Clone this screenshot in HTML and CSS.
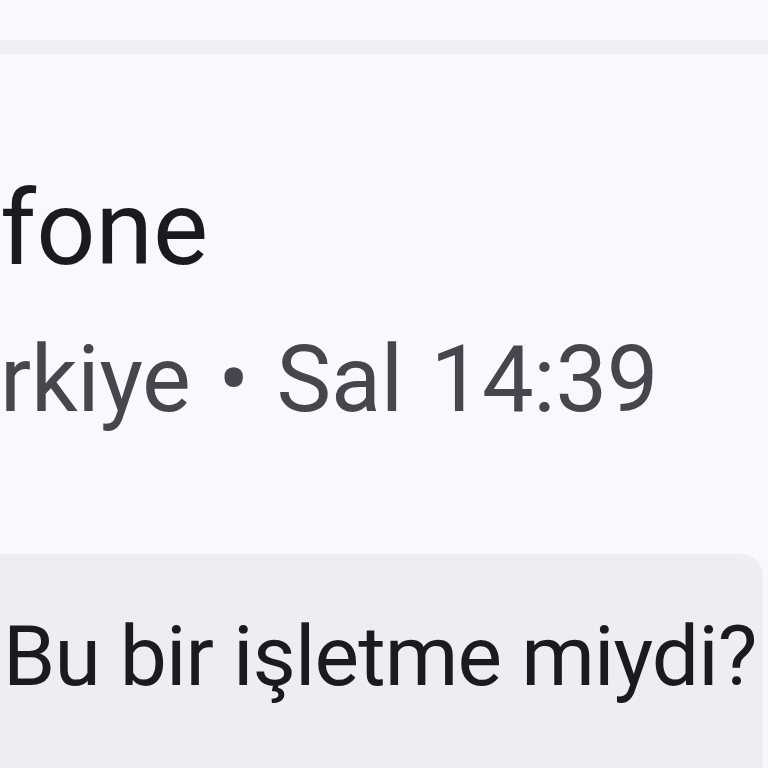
FILE: index.html
```html
<!DOCTYPE html>
<html lang="tr">
<head>
<meta charset="utf-8">
<link rel="stylesheet" href="styles.css">
</head>
<body>
<div class="page">
  <div class="divider"></div>
  <div class="header">
    <div class="title">fone</div>
    <div class="meta">rkiye • Sal 14:39</div>
  </div>
  <div class="prompt">
    <div class="prompt-text">Bu bir işletme miydi?</div>
  </div>
</div>
</body>
</html>
```
FILE: styles.css
```css
html, body {
  margin: 0;
  padding: 0;
  background: #f9f8fd;
}
.page {
  width: 768px;
  height: 768px;
  overflow: hidden;
  display: flex;
  flex-direction: column;
  font-family: Roboto, "Noto Sans", sans-serif;
}
.divider {
  margin-top: 40px;
  height: 14px;
  background: #efeef4;
}
.header {
  padding-top: 115px;
}
.title {
  font-size: 104px;
  line-height: 120px;
  color: #1b1b1f;
  white-space: nowrap;
}
.meta {
  margin-top: 36px;
  font-size: 92px;
  line-height: 110px;
  color: #46464f;
  letter-spacing: -0.25px;
  word-spacing: 5px;
  white-space: nowrap;
}
.prompt {
  margin-top: 119px;
  margin-right: 5px;
  flex: 1;
  background: #eeedf4;
  border-top-right-radius: 22px;
  padding-top: 53px;
  padding-left: 3px;
}
.prompt-text {
  font-size: 84px;
  line-height: 100px;
  color: #1b1b1f;
  letter-spacing: -0.9px;
  white-space: nowrap;
}
```
